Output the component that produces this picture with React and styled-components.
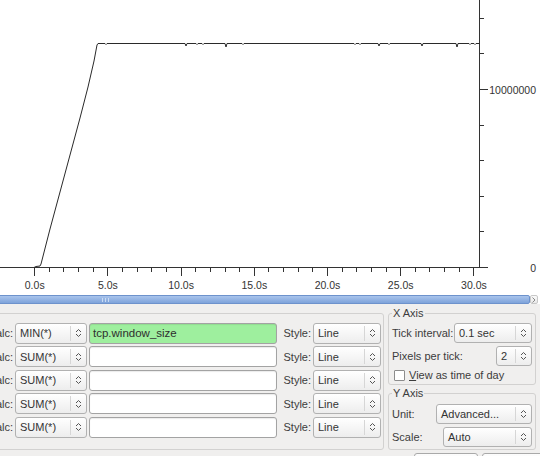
import React from "react";
import styled, { createGlobalStyle } from "styled-components";

const GlobalStyle = createGlobalStyle`
  html, body {
    margin: 0;
    padding: 0;
    overflow: hidden;
    background: #f0efee;
  }
`;

// chart scale, taken from the tick spacing of the reference
const X0 = 34.7;
const XS = 14.64;
const Y0 = 267.5;
const YS = 35.6;
const AXIS_X = 479.5;

const dips = [
  [106, 1], [186, 2.5], [197, 1], [203, 1], [226, 3.5], [243, 1],
  [355, 1], [360, 1], [379, 2.5], [389, 1], [422, 2.5], [457, 3.5],
  [470, 1], [475, 1],
];

const buildLine = () => {
  const pts = [
    [34, 267.5], [36, 266.5], [40, 266], [41, 264], [50, 229], [60, 192],
    [70, 155], [80, 118], [88, 87], [94, 61], [97, 45], [98, 43.5],
  ];
  dips.forEach(([x, d]) => {
    pts.push([x - 1, 43.5], [x, 43.5 + d], [x + 1, 43.5]);
  });
  pts.push([AXIS_X, 43.5]);
  return pts.map((p) => p.join(",")).join(" ");
};

const Chart = () => {
  const xTicks = [];
  for (let s = 0; s <= 30; s++) {
    const x = X0 + s * XS;
    const major = s % 5 === 0;
    xTicks.push(
      <line key={"xt" + s} x1={x} x2={x} y1={Y0} y2={Y0 + (major ? 8 : 4)} />
    );
  }
  const xLabels = [0, 5, 10, 15, 20, 25, 30].map((s) => (
    <text key={"xl" + s} x={X0 + s * XS} y={289} textAnchor="middle">
      {s.toFixed(1)}s
    </text>
  ));
  const yTicks = [];
  for (let k = 0; k <= 7; k++) {
    const y = Y0 - k * YS;
    const major = k % 5 === 0;
    yTicks.push(
      <line key={"yt" + k} x1={AXIS_X} x2={AXIS_X + (major ? 8 : 4)} y1={y} y2={y} />
    );
  }

  return (
    <svg width="540" height="295" viewBox="0 0 540 295">
      <g stroke="#333" strokeWidth="1" shapeRendering="crispEdges">
        <line x1="0" x2={AXIS_X} y1={Y0} y2={Y0} />
        <line x1={AXIS_X} x2={AXIS_X} y1="0" y2={Y0} />
        {xTicks}
        {yTicks}
      </g>
      <polyline points={buildLine()} fill="none" stroke="#2a2a2a" strokeWidth="1" />
      <g fontFamily="'Liberation Sans', Arial, sans-serif" fontSize="10.5" fill="#333">
        {xLabels}
        <text x="536" y={Y0 - 5 * YS + 4} textAnchor="end">10000000</text>
        <text x="536" y={Y0 + 4} textAnchor="end">0</text>
      </g>
    </svg>
  );
};

const UpDown = () => (
  <svg width="7" height="10" viewBox="0 0 7 10">
    <path d="M1 4 L3.5 1.5 L6 4 M1 6 L3.5 8.5 L6 6" fill="none" stroke="#555" strokeWidth="1" />
  </svg>
);

const Combo = ({ width, height = 20, children }) => (
  <ComboBox $width={width} $height={height}>
    <ComboText>{children}</ComboText>
    <ComboArrow>
      <UpDown />
    </ComboArrow>
  </ComboBox>
);

const graphs = [
  { calc: "MIN(*)", filter: "tcp.window_size", active: true },
  { calc: "SUM(*)", filter: "" },
  { calc: "SUM(*)", filter: "" },
  { calc: "SUM(*)", filter: "" },
  { calc: "SUM(*)", filter: "" },
];

const App = () => {
  return (
    <Page>
      <GlobalStyle />
      <PlotArea>
        <Chart />
      </PlotArea>
      <Scrollbar>
        <Thumb>
          <Grip />
        </Thumb>
        <StepButton>
          <svg width="4" height="6" viewBox="0 0 4 6">
            <path d="M0.5 0.5 L3 3 L0.5 5.5" fill="none" stroke="#888" strokeWidth="1" />
          </svg>
        </StepButton>
      </Scrollbar>
      <Panel>
        <GraphsFrame>
          {graphs.map((g, i) => (
            <GraphRow key={i}>
              <CalcLabel>Calc:</CalcLabel>
              <Combo width={72} height={21}>{g.calc}</Combo>
              <FilterField $active={g.active}>{g.filter}</FilterField>
              <StyleLabel>Style:</StyleLabel>
              <Combo width={68} height={21}>Line</Combo>
            </GraphRow>
          ))}
        </GraphsFrame>
        <AxisColumn>
          <Frame>
            <FrameTitle>X Axis</FrameTitle>
            <FrameBody>
              <AxisRow>
                <Label>Tick interval:</Label>
                <Combo width={78}>0.1 sec</Combo>
              </AxisRow>
              <AxisRow>
                <Label>Pixels per tick:</Label>
                <Combo width={36}>2</Combo>
              </AxisRow>
              <CheckRow>
                <CheckBox />
                <Label><u>V</u>iew as time of day</Label>
              </CheckRow>
            </FrameBody>
          </Frame>
          <Frame>
            <FrameTitle>Y Axis</FrameTitle>
            <FrameBody $top={4}>
              <AxisRow>
                <Label>Unit:</Label>
                <Combo width={96}>Advanced...</Combo>
              </AxisRow>
              <AxisRow>
                <Label>Scale:</Label>
                <Combo width={89}>Auto</Combo>
              </AxisRow>
            </FrameBody>
          </Frame>
        </AxisColumn>
      </Panel>
      <ButtonRow>
        <DialogButton $width={62} />
        <DialogButton $width={66} />
      </ButtonRow>
    </Page>
  );
};

const Page = styled.div`
  width: 540px;
  height: 456px;
  overflow: hidden;
  background: #f0efee;
  font-family: "Liberation Sans", Arial, sans-serif;
  font-size: 11px;
  color: #3c3c3c;
`;

const PlotArea = styled.div`
  height: 295px;
  background: #ffffff;

  & svg {
    display: block;
  }
`;

const Scrollbar = styled.div`
  display: flex;
  height: 9px;
  background: #ffffff;
  padding-right: 2px;
  box-sizing: border-box;
`;

const Thumb = styled.div`
  flex: 1;
  margin-left: -320px;
  display: flex;
  justify-content: center;
  align-items: center;
  background: linear-gradient(#a9c4ec, #7ea3da);
  border: 1px solid #6d92cc;
  border-radius: 2px;
`;

const Grip = styled.div`
  width: 5px;
  height: 4px;
  border-left: 1px solid #c9dbf4;
  border-right: 1px solid #c9dbf4;
  background: linear-gradient(90deg, transparent 2px, #c9dbf4 2px, #c9dbf4 3px, transparent 3px);
`;

const StepButton = styled.div`
  width: 8px;
  display: flex;
  align-items: center;
  justify-content: center;
  background: linear-gradient(#fafafa, #e8e8e8);
  border: 1px solid #c8c8c8;
  border-radius: 2px;
  box-sizing: border-box;
`;

const Panel = styled.div`
  display: flex;
  gap: 4px;
  padding: 9px 4px 0 0;
`;

const GraphsFrame = styled.div`
  flex: 1;
  min-width: 0;
  margin-left: -17px;
  padding: 8.5px 2px 0 4px;
  border: 1px solid #d2d1d0;
  border-radius: 3px;
  display: flex;
  flex-direction: column;
  gap: 2.5px;
`;

const GraphRow = styled.div`
  display: flex;
  align-items: center;
  height: 21px;
`;

const CalcLabel = styled.span`
  width: 25px;
  flex: none;
  text-align: right;
  margin-right: 2px;
`;

const StyleLabel = styled.span`
  flex: none;
  margin: 0 2px 0 6px;
`;

const FilterField = styled.div`
  flex: 1;
  min-width: 0;
  height: 21px;
  margin-left: 2px;
  box-sizing: border-box;
  padding: 0 3px;
  display: flex;
  align-items: center;
  border: 1px solid #a3a3a3;
  border-radius: 3px;
  background: ${(p) => (p.$active ? "#9eef9e" : "#ffffff")};
  box-shadow: inset 0 1px 1px rgba(0, 0, 0, 0.08);
  color: #2e2e2e;
  font-size: 11.5px;
`;

const ComboBox = styled.div`
  flex: none;
  display: flex;
  align-items: stretch;
  width: ${(p) => p.$width}px;
  height: ${(p) => p.$height}px;
  box-sizing: border-box;
  border: 1px solid #b1b1b1;
  border-radius: 3px;
  background: linear-gradient(#ffffff, #ededed);
  color: #333;
`;

const ComboText = styled.span`
  flex: 1;
  min-width: 0;
  display: flex;
  align-items: center;
  padding-left: 4px;
  white-space: nowrap;
  overflow: hidden;
`;

const ComboArrow = styled.span`
  flex: none;
  width: 15px;
  display: flex;
  align-items: center;
  justify-content: center;
  border-left: 1px solid #d6d6d6;
  margin: 2px 0;

  & svg {
    display: block;
  }
`;

const AxisColumn = styled.div`
  width: 148px;
  flex: none;
  display: flex;
  flex-direction: column;
  gap: 8px;
`;

const Frame = styled.div`
  border: 1px solid #d2d1d0;
  border-radius: 3px;
  padding: 0 3px 2px 3px;
`;

const FrameTitle = styled.div`
  width: fit-content;
  margin-top: -8px;
  padding: 0 1px;
  line-height: 14px;
  height: 14px;
  background: #f0efee;
  color: #3c3c3c;
`;

const FrameBody = styled.div`
  display: flex;
  flex-direction: column;
  gap: 3px;
  padding-top: ${(p) => p.$top ?? 3}px;
`;

const AxisRow = styled.div`
  display: flex;
  align-items: center;
  justify-content: space-between;
`;

const Label = styled.span`
  white-space: nowrap;
`;

const CheckRow = styled.div`
  display: flex;
  align-items: center;
  gap: 4px;
  height: 14px;
  margin-top: -1px;
  padding-left: 2px;
`;

const CheckBox = styled.span`
  width: 9px;
  height: 9px;
  border: 1px solid #8c8c8c;
  border-radius: 1px;
  background: #ffffff;
`;

const ButtonRow = styled.div`
  display: flex;
  justify-content: flex-end;
  gap: 4px;
  margin: 3px -10px 0 0;
`;

const DialogButton = styled.div`
  width: ${(p) => p.$width}px;
  height: 26px;
  border: 1px solid #a9a9a9;
  border-radius: 3px;
  background: linear-gradient(#fdfdfd, #e9e9e9);
`;

export default App;
